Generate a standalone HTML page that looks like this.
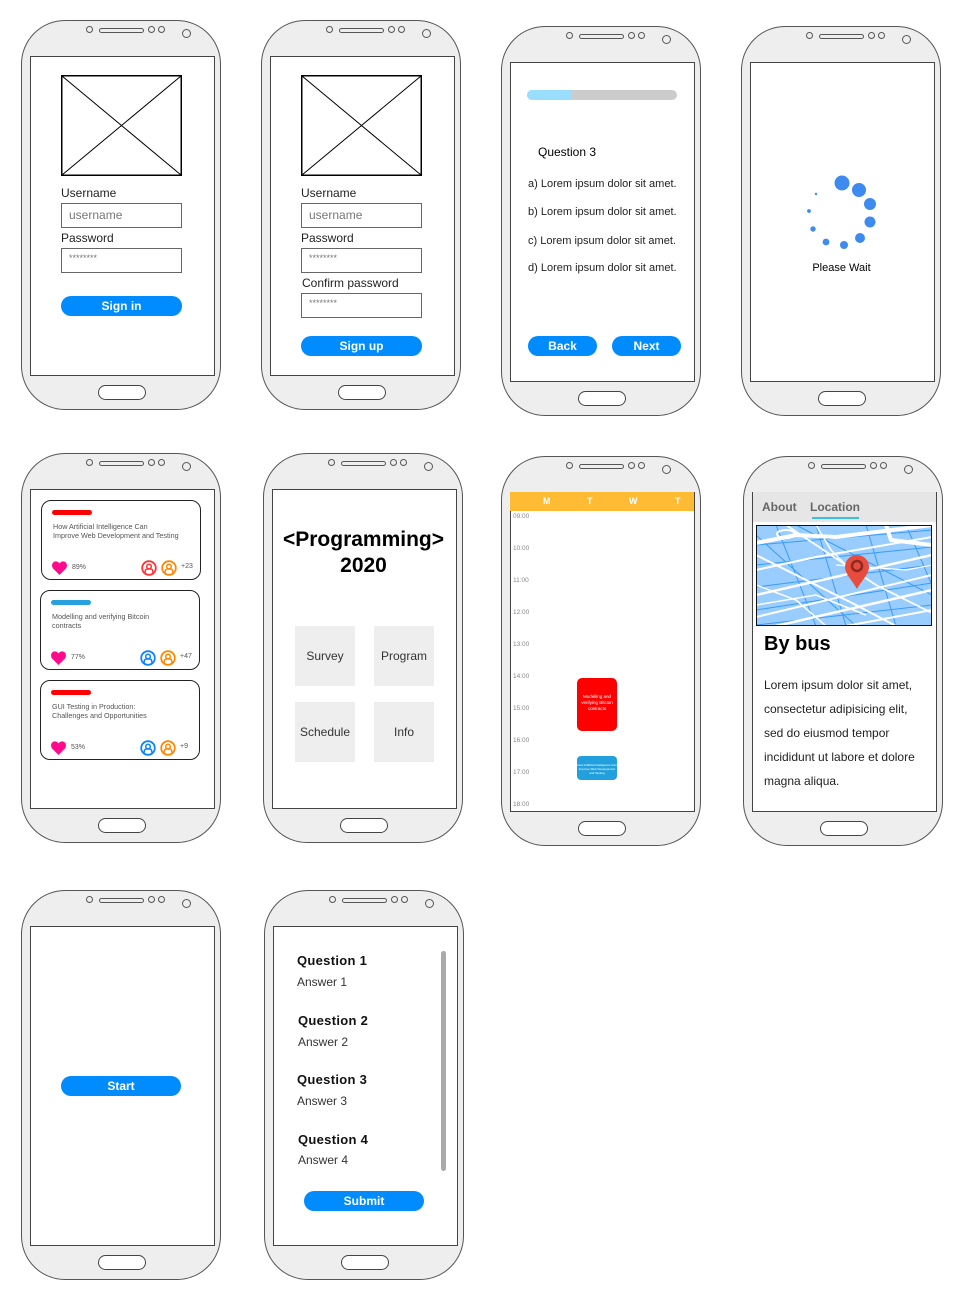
<!DOCTYPE html>
<html><head><meta charset="utf-8"><style>
*{margin:0;padding:0;box-sizing:border-box}
body{width:964px;height:1301px;background:#fff;position:relative;overflow:hidden;font-family:"Liberation Sans",Arial,sans-serif;color:#000}
.a{position:absolute}
.ph{position:absolute;width:200px;height:390px;background:#eee;border:1.5px solid #555;border-radius:44px}
.scr{position:absolute;left:8px;top:35px;width:185px;height:320px;background:#fff;border:1.5px solid #444}
.spk{position:absolute;left:77px;top:7px;width:45px;height:5px;border:1.2px solid #555;border-radius:3px}
.dot{position:absolute;width:7px;height:7px;border:1.2px solid #555;border-radius:50%}
.cam{position:absolute;width:9px;height:9px;border:1.2px solid #555;border-radius:50%}
.home{position:absolute;left:76px;top:364px;width:48px;height:15px;border:1.3px solid #444;border-radius:8px;background:#fff}
.btn{position:absolute;background:#008cff;color:#fff;font-weight:bold;font-size:12px;text-align:center;border-radius:10px;height:20px;line-height:20px}
.inp{position:absolute;width:121px;height:25px;border:1.3px solid #666;font-size:12px;color:#777;padding:4px 0 0 7px}
.lbl{position:absolute;font-size:12px;color:#222}
.card{position:absolute;width:160px;height:80px;border:1.3px solid #222;border-radius:10px;background:#fff}
.card .bar{position:absolute;left:10px;top:9px;width:40px;height:5px;border-radius:3px}
.card .t{position:absolute;left:11px;top:21px;font-size:7.2px;color:#555;line-height:9px;width:150px;white-space:nowrap}
.card .pc{position:absolute;left:30px;top:63px;font-size:7px;color:#555}
.card .pl{position:absolute;left:139px;top:62px;font-size:7px;color:#555}
.gbox{position:absolute;width:60px;height:60px;background:#eee;font-size:12px;color:#333;text-align:center;line-height:60px}
.tm{position:absolute;left:513px;font-size:6.5px;color:#888}
.q{position:absolute;font-size:13px;font-weight:bold;letter-spacing:.3px;color:#111}
.an{position:absolute;font-size:12px;color:#333}
.op{position:absolute;left:528px;font-size:11px;color:#222}
</style></head><body>

<div class="ph" style="left:21px;top:20px"><div class="dot" style="left:64px;top:5px"></div><div class="spk"></div><div class="dot" style="left:126px;top:5px"></div><div class="dot" style="left:136px;top:5px"></div><div class="cam" style="left:160px;top:8px"></div><div class="scr"></div><div class="home"></div></div>
<div class="ph" style="left:261px;top:20px"><div class="dot" style="left:64px;top:5px"></div><div class="spk"></div><div class="dot" style="left:126px;top:5px"></div><div class="dot" style="left:136px;top:5px"></div><div class="cam" style="left:160px;top:8px"></div><div class="scr"></div><div class="home"></div></div>
<div class="ph" style="left:501px;top:26px"><div class="dot" style="left:64px;top:5px"></div><div class="spk"></div><div class="dot" style="left:126px;top:5px"></div><div class="dot" style="left:136px;top:5px"></div><div class="cam" style="left:160px;top:8px"></div><div class="scr"></div><div class="home"></div></div>
<div class="ph" style="left:741px;top:26px"><div class="dot" style="left:64px;top:5px"></div><div class="spk"></div><div class="dot" style="left:126px;top:5px"></div><div class="dot" style="left:136px;top:5px"></div><div class="cam" style="left:160px;top:8px"></div><div class="scr"></div><div class="home"></div></div>
<div class="ph" style="left:21px;top:453px"><div class="dot" style="left:64px;top:5px"></div><div class="spk"></div><div class="dot" style="left:126px;top:5px"></div><div class="dot" style="left:136px;top:5px"></div><div class="cam" style="left:160px;top:8px"></div><div class="scr"></div><div class="home"></div></div>
<div class="ph" style="left:263px;top:453px"><div class="dot" style="left:64px;top:5px"></div><div class="spk"></div><div class="dot" style="left:126px;top:5px"></div><div class="dot" style="left:136px;top:5px"></div><div class="cam" style="left:160px;top:8px"></div><div class="scr"></div><div class="home"></div></div>
<div class="ph" style="left:501px;top:456px"><div class="dot" style="left:64px;top:5px"></div><div class="spk"></div><div class="dot" style="left:126px;top:5px"></div><div class="dot" style="left:136px;top:5px"></div><div class="cam" style="left:160px;top:8px"></div><div class="scr"></div><div class="home"></div></div>
<div class="ph" style="left:743px;top:456px"><div class="dot" style="left:64px;top:5px"></div><div class="spk"></div><div class="dot" style="left:126px;top:5px"></div><div class="dot" style="left:136px;top:5px"></div><div class="cam" style="left:160px;top:8px"></div><div class="scr"></div><div class="home"></div></div>
<div class="ph" style="left:21px;top:890px"><div class="dot" style="left:64px;top:5px"></div><div class="spk"></div><div class="dot" style="left:126px;top:5px"></div><div class="dot" style="left:136px;top:5px"></div><div class="cam" style="left:160px;top:8px"></div><div class="scr"></div><div class="home"></div></div>
<div class="ph" style="left:264px;top:890px"><div class="dot" style="left:64px;top:5px"></div><div class="spk"></div><div class="dot" style="left:126px;top:5px"></div><div class="dot" style="left:136px;top:5px"></div><div class="cam" style="left:160px;top:8px"></div><div class="scr"></div><div class="home"></div></div>

<!-- P1 -->
<svg class="a" style="left:61px;top:75px" width="121" height="101"><rect x=".75" y=".75" width="119.5" height="99.5" fill="none" stroke="#000" stroke-width="1.5"/><path d="M1 1L120 100M120 1L1 100" stroke="#000" stroke-width="1"/></svg>
<div class="lbl" style="left:61px;top:186px">Username</div>
<div class="inp" style="left:61px;top:203px">username</div>
<div class="lbl" style="left:61px;top:231px">Password</div>
<div class="inp" style="left:61px;top:248px;font-size:9px">********</div>
<div class="btn" style="left:61px;top:296px;width:121px">Sign in</div>

<!-- P2 -->
<svg class="a" style="left:301px;top:75px" width="121" height="101"><rect x=".75" y=".75" width="119.5" height="99.5" fill="none" stroke="#000" stroke-width="1.5"/><path d="M1 1L120 100M120 1L1 100" stroke="#000" stroke-width="1"/></svg>
<div class="lbl" style="left:301px;top:186px">Username</div>
<div class="inp" style="left:301px;top:203px">username</div>
<div class="lbl" style="left:301px;top:231px">Password</div>
<div class="inp" style="left:301px;top:248px;font-size:9px">********</div>
<div class="lbl" style="left:302px;top:276px">Confirm password</div>
<div class="inp" style="left:301px;top:293px;font-size:9px">********</div>
<div class="btn" style="left:301px;top:336px;width:121px">Sign up</div>

<!-- P3 -->
<div class="a" style="left:527px;top:90px;width:150px;height:10px;background:#ccc;border-radius:5px"></div>
<div class="a" style="left:527px;top:90px;width:44px;height:10px;background:#99ddff;border-radius:5px 0 0 5px"></div>
<div class="a" style="left:538px;top:145px;font-size:12px">Question 3</div>
<div class="op" style="top:178px">a) Lorem ipsum dolor sit amet.</div>
<div class="op" style="top:206px">b) Lorem ipsum dolor sit amet.</div>
<div class="op" style="top:235px">c) Lorem ipsum dolor sit amet.</div>
<div class="op" style="top:262px">d) Lorem ipsum dolor sit amet.</div>
<div class="btn" style="left:528px;top:336px;width:69px">Back</div>
<div class="btn" style="left:612px;top:336px;width:69px">Next</div>

<!-- P4 -->
<svg class="a" style="left:749px;top:61px" width="185" height="320">
<g fill="#3d8bef" transform="translate(-749,-61)">
<circle cx="842" cy="183" r="7.5"/><circle cx="859" cy="190" r="7"/><circle cx="870" cy="204" r="6"/><circle cx="870" cy="222" r="5.5"/><circle cx="860" cy="238" r="5"/><circle cx="844" cy="245" r="4"/><circle cx="826" cy="242" r="3.4"/><circle cx="813" cy="229" r="2.7"/><circle cx="809" cy="211" r="1.9"/><circle cx="816" cy="194" r="1.2"/>
</g></svg>
<div class="a" style="left:749px;top:262px;width:185px;text-align:center;font-size:11px">Please Wait</div>

<svg width="0" height="0" style="position:absolute"><defs>
<symbol id="hrt" viewBox="0 0 16 15"><path d="M8 15L1.5 8.5C-0.5 6.5-0.5 3 1.5 1.3 3.5-0.3 6.3 0.3 8 2.5 9.7 0.3 12.5-0.3 14.5 1.3 16.5 3 16.5 6.5 14.5 8.5Z" fill="#ff0a8c"/></symbol>
<symbol id="av" viewBox="0 0 16 16"><circle cx="8" cy="8" r="6.8" fill="none" stroke="currentColor" stroke-width="1.8"/><circle cx="8" cy="6.5" r="2.3" fill="none" stroke="currentColor" stroke-width="1.5"/><path d="M4.3 12.5V11a2 2 0 0 1 2-2h3.4a2 2 0 0 1 2 2v1.5" fill="none" stroke="currentColor" stroke-width="1.5"/></symbol>
</defs></svg>

<div class="card" style="left:41px;top:500px"><div class="bar" style="background:#f00"></div><div class="t">How Artificial Intelligence Can<br>Improve Web Development and Testing</div>
<svg class="a" style="left:10px;top:60px" width="15" height="14"><use href="#hrt"/></svg><div class="pc">89%</div>
<svg class="a" style="left:99px;top:59px;color:#f33" width="16" height="16"><use href="#av"/></svg><svg class="a" style="left:119px;top:59px;color:#f80" width="16" height="16"><use href="#av"/></svg><div class="pl">+23</div></div>

<div class="card" style="left:40px;top:590px"><div class="bar" style="background:#27a0e0"></div><div class="t">Modelling and verifying Bitcoin<br>contracts</div>
<svg class="a" style="left:10px;top:60px" width="15" height="14"><use href="#hrt"/></svg><div class="pc">77%</div>
<svg class="a" style="left:99px;top:59px;color:#0a84ff" width="16" height="16"><use href="#av"/></svg><svg class="a" style="left:119px;top:59px;color:#f80" width="16" height="16"><use href="#av"/></svg><div class="pl">+47</div></div>

<div class="card" style="left:40px;top:680px"><div class="bar" style="background:#f00"></div><div class="t">GUI Testing in Production:<br>Challenges and Opportunities</div>
<svg class="a" style="left:10px;top:60px" width="15" height="14"><use href="#hrt"/></svg><div class="pc">53%</div>
<svg class="a" style="left:99px;top:59px;color:#0a84ff" width="16" height="16"><use href="#av"/></svg><svg class="a" style="left:119px;top:59px;color:#f80" width="16" height="16"><use href="#av"/></svg><div class="pl">+9</div></div>

<!-- P6 -->
<div class="a" style="left:271px;top:527px;width:185px;text-align:center;font-size:21px;font-weight:bold;line-height:26px">&lt;Programming&gt;<br>2020</div>
<div class="gbox" style="left:295px;top:626px">Survey</div>
<div class="gbox" style="left:374px;top:626px">Program</div>
<div class="gbox" style="left:295px;top:702px">Schedule</div>
<div class="gbox" style="left:374px;top:702px">Info</div>

<!-- P7 -->
<div class="a" style="left:510px;top:492px;width:184px;height:19px;background:#ffbb33;color:#fff;font-weight:bold;font-size:9px">
<span class="a" style="left:33px;top:4px">M</span><span class="a" style="left:77px;top:4px">T</span><span class="a" style="left:119px;top:4px">W</span><span class="a" style="left:165px;top:4px">T</span></div>
<div class="tm" style="top:513px">09:00</div><div class="tm" style="top:545px">10:00</div><div class="tm" style="top:577px">11:00</div><div class="tm" style="top:609px">12:00</div><div class="tm" style="top:641px">13:00</div><div class="tm" style="top:673px">14:00</div><div class="tm" style="top:705px">15:00</div><div class="tm" style="top:737px">16:00</div><div class="tm" style="top:769px">17:00</div><div class="tm" style="top:801px">18:00</div>
<div class="a" style="left:577px;top:678px;width:40px;height:53px;background:#f00;border-radius:5px;color:#fff;font-size:4.5px;text-align:center;padding-top:16px;line-height:6px">Modelling and verifying Bitcoin contracts</div>
<div class="a" style="left:577px;top:756px;width:40px;height:24px;background:#22a0dd;border-radius:4px;color:#fff;font-size:3px;text-align:center;padding-top:7px;line-height:4px">How Artificial Intelligence Can Improve Web Development and Testing</div>

<!-- P8 -->
<div class="a" style="left:753px;top:492px;width:183px;height:30px;background:#e6e6e6"></div>
<div class="a" style="left:762px;top:500px;font-size:12px;font-weight:bold;color:#666">About</div>
<div class="a" style="left:810px;top:500px;font-size:12px;font-weight:bold;color:#666">Location</div>
<div class="a" style="left:812px;top:517px;width:47px;height:2px;background:#3bbfe0"></div>
<svg class="a" style="left:756px;top:525px" width="176" height="101" viewBox="0 0 176 101">
<rect width="176" height="101" fill="#99ccff"/>
<g stroke="#1e90ff" stroke-width="1" fill="none" opacity=".8">
<path d="M0 20L176 5M0 40L176 22M0 62L176 40M0 85L176 58M0 100L176 80M20 0L60 101M60 0L90 101M110 0L140 101M150 0L176 60M0 10L100 101M40 0L176 70"/></g>
<g stroke="#fff" fill="none">
<path d="M0 18L40 10L80 12L176 0" stroke-width="4"/>
<path d="M0 45L60 32L176 12" stroke-width="2"/>
<path d="M0 70L176 30" stroke-width="2.5"/>
<path d="M0 92L176 50" stroke-width="2"/>
<path d="M20 101L176 65" stroke-width="2.5"/>
<path d="M90 101L176 85" stroke-width="2"/>
<path d="M0 30L50 55L100 80L140 101" stroke-width="2"/>
<path d="M30 0L60 20L120 60L176 88" stroke-width="1.8"/>
<path d="M130 0L135 15L176 20" stroke-width="4"/>
<path d="M0 60L40 75L70 101" stroke-width="1.5"/>
<path d="M60 0L75 25L95 45" stroke-width="1.5"/>
<path d="M0 80L60 70L110 90" stroke-width="1.5"/>
<path d="M80 40L150 45L176 40" stroke-width="1.2"/>
<ellipse cx="30" cy="9" rx="9" ry="4" stroke-width="2"/>
</g>
<rect x=".5" y=".5" width="175" height="100" fill="none" stroke="#111"/>
<path d="M101 64C96 55 89 49 89 42a12 12 0 0 1 24 0c0 7-7 13-12 22Z" fill="#e74c3c"/>
<circle cx="101" cy="41" r="5" fill="none" stroke="#8b2a22" stroke-width="2.5"/>
</svg>
<div class="a" style="left:764px;top:633px;font-size:20px;font-weight:bold">By bus</div>
<div class="a" style="left:764px;top:673px;font-size:12px;line-height:24px;color:#222;width:165px">Lorem ipsum dolor sit amet, consectetur adipisicing elit, sed do eiusmod tempor incididunt ut labore et dolore magna aliqua.</div>

<!-- P9 -->
<div class="btn" style="left:61px;top:1076px;width:120px">Start</div>

<!-- P10 -->
<div class="q" style="left:297px;top:953px">Question 1</div><div class="an" style="left:297px;top:975px">Answer 1</div>
<div class="q" style="left:298px;top:1013px">Question 2</div><div class="an" style="left:298px;top:1035px">Answer 2</div>
<div class="q" style="left:297px;top:1072px">Question 3</div><div class="an" style="left:297px;top:1094px">Answer 3</div>
<div class="q" style="left:298px;top:1132px">Question 4</div><div class="an" style="left:298px;top:1153px">Answer 4</div>
<div class="a" style="left:441px;top:951px;width:5px;height:220px;background:#aaa;border-radius:3px"></div>
<div class="btn" style="left:304px;top:1191px;width:120px">Submit</div>

</body></html>
